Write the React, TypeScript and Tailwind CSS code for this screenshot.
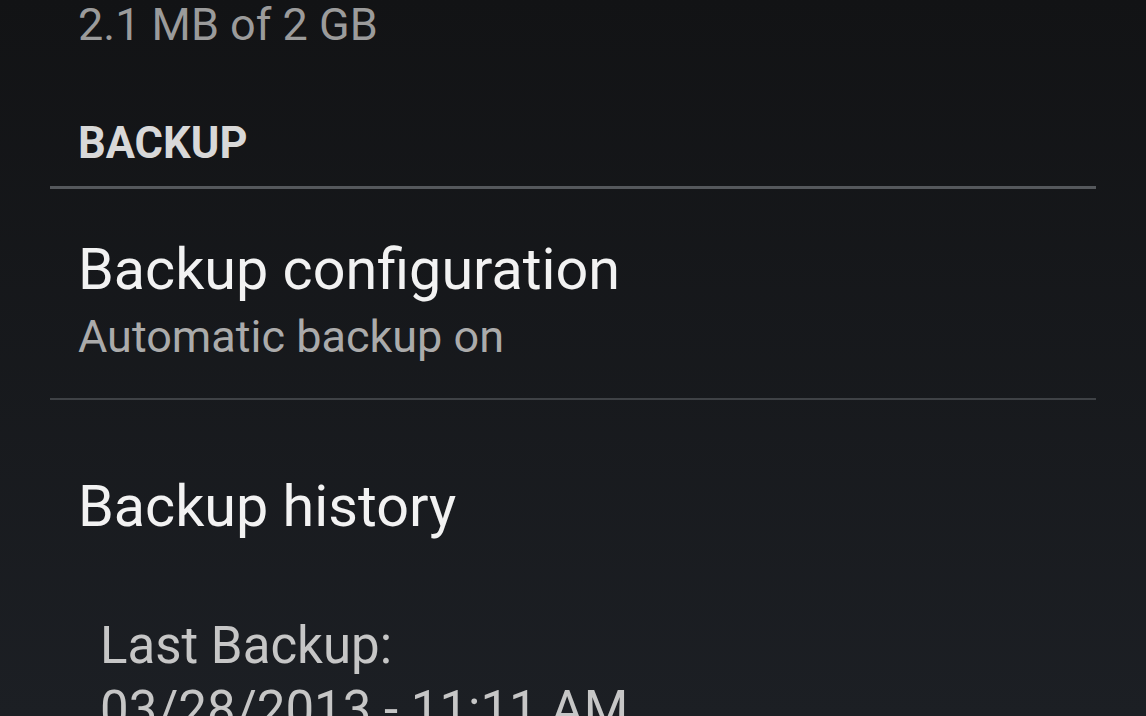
export default function App() {
  return (
    <div
      className="w-[1146px] h-[716px] overflow-hidden bg-gradient-to-b from-[#121315] to-[#1c1f24]"
      style={{ fontFamily: "Roboto, 'Noto Sans', sans-serif" }}
    >
      <div className="px-[50px]">
        <div className="pl-[28px] pt-[2px] text-[45px] leading-[45px] text-[#9b9b9b]">2.1 MB of 2 GB</div>
        <div className="pl-[28px] mt-[75px] text-[43.5px] leading-[43px] font-bold text-[#d8d8d8]">BACKUP</div>
        <div className="mt-[21px] h-[3px] bg-[#55585c]" />
        <div className="pl-[28px] mt-[52px] text-[57.5px] leading-[57px] text-[#f2f2f2]">Backup configuration</div>
        <div className="pl-[28px] mt-[16px] text-[45px] leading-[45px] text-[#ababab]">Automatic backup on</div>
        <div className="mt-[39px] h-[2px] bg-[#3f4246]" />
        <div className="pl-[28px] mt-[78px] text-[57.5px] leading-[57px] text-[#f2f2f2]">Backup history</div>
        <div className="pl-[50px] mt-[85px] text-[51px] leading-[51px] text-[#c6c6c6]">Last Backup:</div>
        <div className="pl-[50px] mt-[13px] text-[51px] leading-[51px] text-[#c6c6c6] whitespace-nowrap">03/28/2013 - 11:11 AM</div>
      </div>
    </div>
  );
}
